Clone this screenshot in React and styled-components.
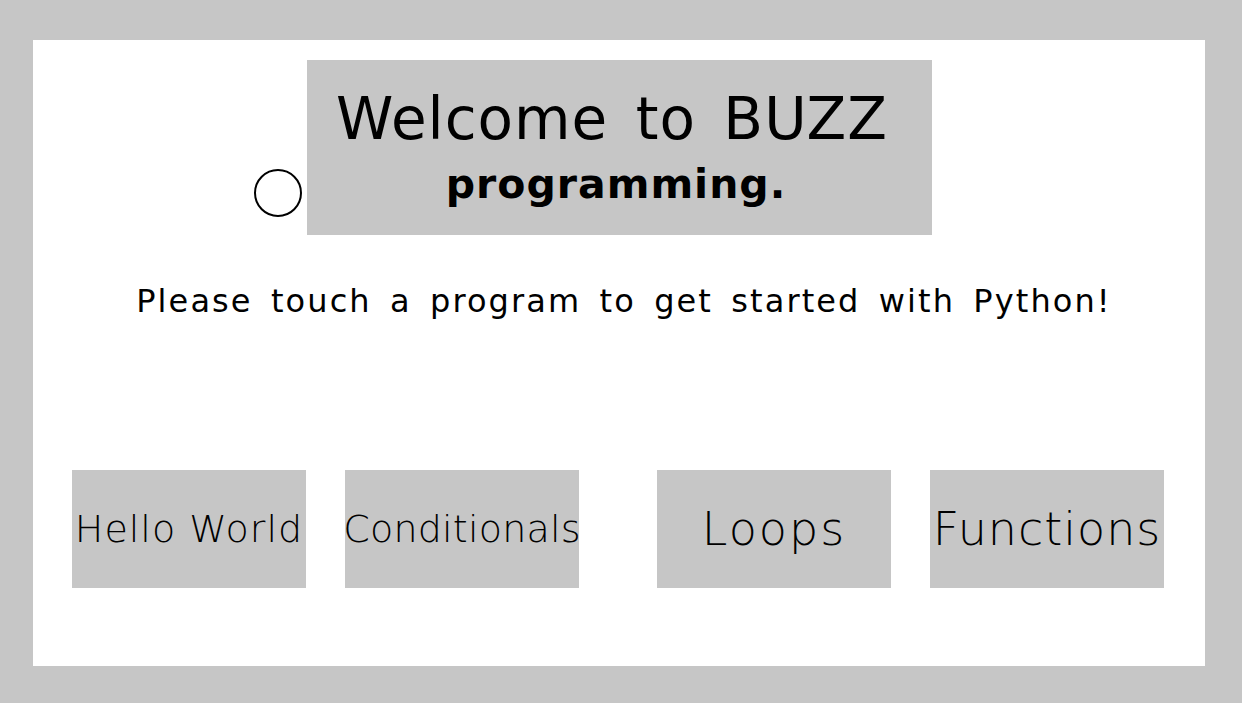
import styled, { createGlobalStyle } from 'styled-components';

const GlobalStyle = createGlobalStyle`
  html, body {
    margin: 0;
    padding: 0;
    background: #c6c6c6;
  }
  body {
    font-family: "DejaVu Sans", "Liberation Sans", sans-serif;
  }
`;

const programs = [
  { name: 'Hello World', size: 38, spacing: 1 },
  { name: 'Conditionals', size: 38, spacing: 0.2 },
  { name: 'Loops', size: 46, spacing: 2 },
  { name: 'Functions', size: 46, spacing: 1 },
];

const App = () => {
  return (
    <>
      <GlobalStyle />
      <Frame>
        <Panel>
          <Header>
            <Indicator />
            <TitleBox>
              <Title>Welcome to BUZZ</Title>
              <Subtitle>programming.</Subtitle>
            </TitleBox>
          </Header>

          <Prompt>Please touch a program to get started with Python!</Prompt>

          <ProgramRow>
            <ProgramPair>
              {programs.slice(0, 2).map((p) => (
                <ProgramButton key={p.name} $size={p.size} $spacing={p.spacing}>
                  {p.name}
                </ProgramButton>
              ))}
            </ProgramPair>
            <ProgramPair>
              {programs.slice(2).map((p) => (
                <ProgramButton key={p.name} $size={p.size} $spacing={p.spacing}>
                  {p.name}
                </ProgramButton>
              ))}
            </ProgramPair>
          </ProgramRow>
        </Panel>
      </Frame>
    </>
  );
};

const Frame = styled.div`
  width: 1242px;
  height: 703px;
  box-sizing: border-box;
  padding: 40px 37px 37px 33px;
`;

const Panel = styled.div`
  width: 1172px;
  height: 626px;
  background: #fff;
  display: flex;
  flex-direction: column;
  align-items: center;
  padding-top: 20px;
  box-sizing: border-box;
`;

const Header = styled.div`
  width: 100%;
  display: grid;
  grid-template-columns: 1fr 625px 1fr;
`;

const Indicator = styled.div`
  justify-self: end;
  align-self: end;
  width: 44px;
  height: 44px;
  margin: 0 5px 18px 0;
  border: 2px solid #000;
  border-radius: 50%;
`;

const TitleBox = styled.div`
  height: 175px;
  background: #c6c6c6;
  display: flex;
  flex-direction: column;
  align-items: center;
  justify-content: center;
  color: #000;
`;

const Title = styled.div`
  font-size: 58px;
  line-height: 72px;
  font-weight: 500;
  letter-spacing: 1px;
  word-spacing: 8px;
  margin-left: -14px;
`;

const Subtitle = styled.div`
  font-size: 41px;
  line-height: 58px;
  font-weight: bold;
  letter-spacing: 1px;
  margin-left: -6px;
`;

const Prompt = styled.div`
  margin: 46px 0 0 10px;
  font-size: 32px;
  line-height: 40px;
  letter-spacing: 2.1px;
  word-spacing: 6px;
  color: #000;
`;

const ProgramRow = styled.div`
  margin-top: 149px;
  width: 100%;
  box-sizing: border-box;
  padding: 0 41px 0 39px;
  display: flex;
  justify-content: space-between;
`;

const ProgramPair = styled.div`
  display: flex;
  gap: 39px;
`;

const ProgramButton = styled.div`
  width: 234px;
  height: 118px;
  background: #c6c6c6;
  display: flex;
  align-items: center;
  justify-content: center;
  white-space: nowrap;
  font-size: ${(p) => p.$size}px;
  letter-spacing: ${(p) => p.$spacing}px;
  font-weight: 200;
  color: #000;
`;

export default App;
